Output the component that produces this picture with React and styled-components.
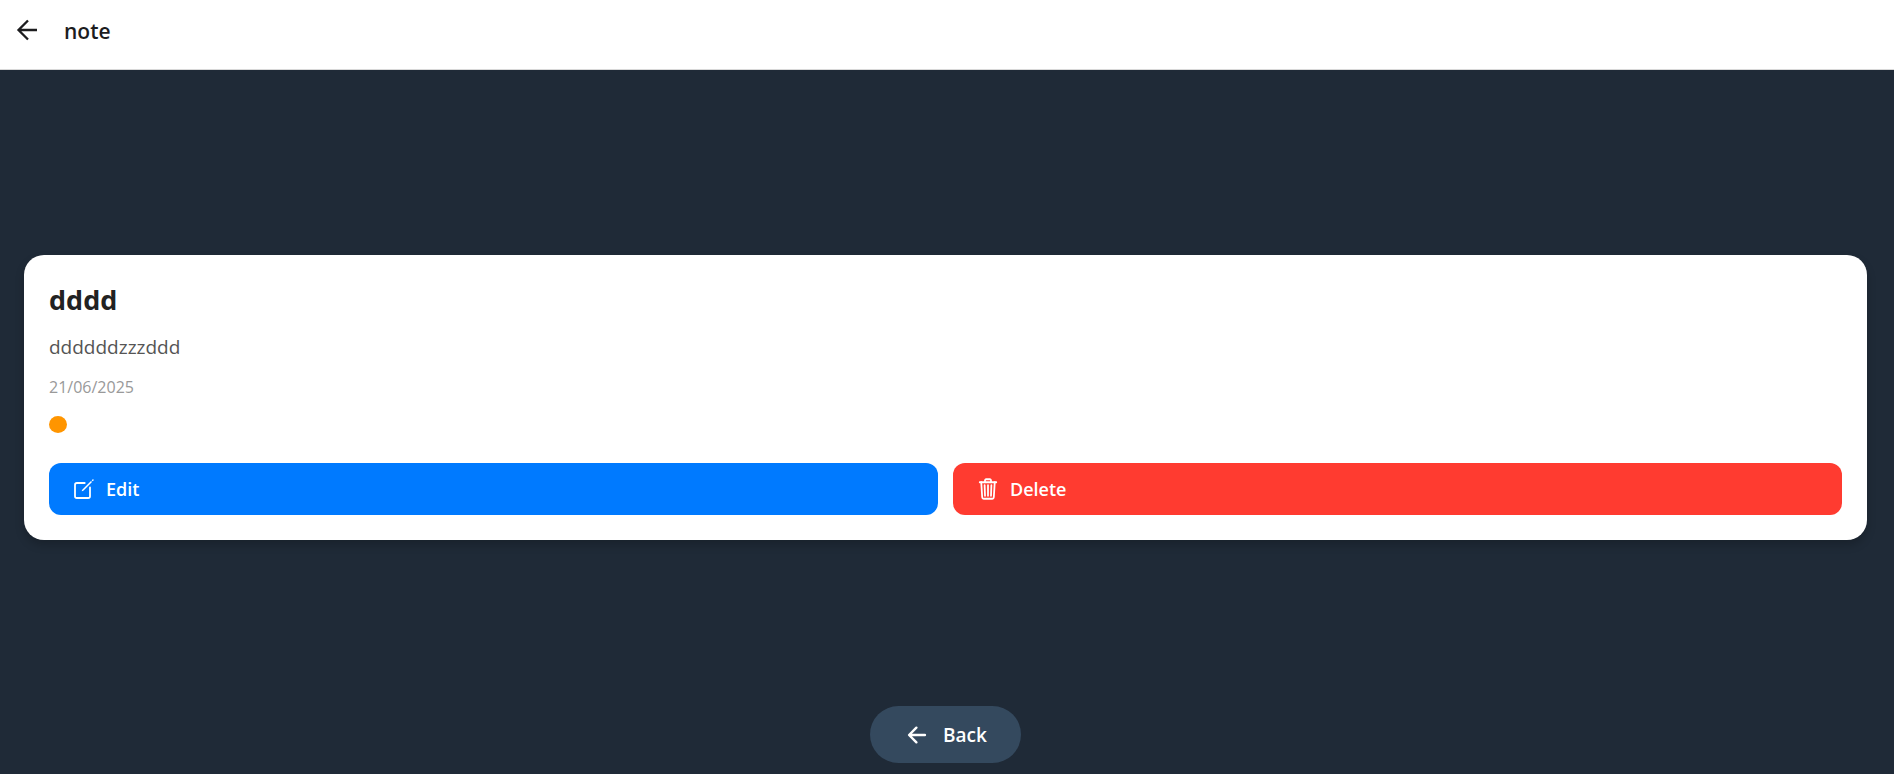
import React from "react";
import styled, { createGlobalStyle } from "styled-components";
import { IoArrowBack, IoCreateOutline, IoTrashOutline } from "react-icons/io5";

const GlobalStyle = createGlobalStyle`
  * { box-sizing: border-box; }
  body {
    margin: 0;
    background: #1f2a37;
    font-family: "Segoe UI", "Open Sans", "Noto Sans", sans-serif;
  }
  button { font-family: inherit; cursor: pointer; }
`;

const Screen = styled.div`
  display: flex;
  flex-direction: column;
  min-height: 100vh;
`;

const Header = styled.header`
  display: flex;
  align-items: center;
  height: 70px;
  padding: 0 14px 8px;
  background: #fff;
  border-bottom: 1px solid #d8d8d8;
`;

const HeaderBack = styled.button`
  display: flex;
  padding: 0;
  border: 0;
  background: none;
  color: #1c1c1e;
`;

const HeaderTitle = styled.h1`
  margin: 0 0 0 24px;
  font-size: 21px;
  line-height: 28px;
  font-weight: 600;
  color: #1c1c1e;
`;

const Main = styled.main`
  flex: 1;
  display: flex;
  align-items: center;
  padding: 18px 27px 0 24px;
`;

const Card = styled.article`
  flex: 1;
  padding: 25px;
  border-radius: 20px;
  background: #fff;
  box-shadow: 0 5px 10px rgba(0, 0, 0, 0.2);
`;

const Title = styled.h2`
  margin: 0 0 11px;
  font-size: 27px;
  line-height: 40px;
  font-weight: 700;
  color: #222;
`;

const Content = styled.p`
  margin: 0 0 13px;
  font-size: 19px;
  line-height: 32px;
  color: #555;
`;

const NoteDate = styled.time`
  display: block;
  margin-bottom: 18px;
  font-size: 16px;
  line-height: 22px;
  color: #999;
`;

const ColorDot = styled.div`
  width: 18px;
  height: 17px;
  margin-bottom: 30px;
  border-radius: 50%;
  background: #ff9500;
`;

const Actions = styled.div`
  display: flex;
  gap: 15px;
`;

const ActionButton = styled.button`
  flex: 1;
  display: flex;
  align-items: center;
  gap: 10px;
  height: 52px;
  padding: 1px 23px 0;
  border: 0;
  border-radius: 12px;
  background: ${(p) => p.$color};
  color: #fff;
  font-size: 18px;
  line-height: 24px;
  font-weight: 600;

  svg path[stroke-width] {
    stroke-width: 38px;
  }
`;

const Footer = styled.footer`
  display: flex;
  justify-content: center;
  padding: 0 3px 11px 0;
`;

const BackButton = styled.button`
  display: flex;
  align-items: center;
  gap: 13px;
  height: 57px;
  padding: 0 34px;
  border: 0;
  border-radius: 30px;
  background: #34495e;
  color: #fff;
  font-size: 19px;
  line-height: 26px;
  font-weight: 600;
`;

function HeaderArrow() {
  return (
    <svg width="26" height="26" viewBox="0 0 26 26" fill="none" stroke="currentColor" strokeWidth="2.3" aria-hidden="true">
      <path d="M23 12H4.5M14 2.5L4.5 12L14 21.5" />
    </svg>
  );
}

export default function App() {
  return (
    <Screen>
      <GlobalStyle />
      <Header>
        <HeaderBack type="button" aria-label="Go back">
          <HeaderArrow />
        </HeaderBack>
        <HeaderTitle>note</HeaderTitle>
      </Header>
      <Main>
        <Card>
          <Title>dddd</Title>
          <Content>ddddddzzzddd</Content>
          <NoteDate dateTime="2025-06-21">21/06/2025</NoteDate>
          <ColorDot />
          <Actions>
            <ActionButton type="button" $color="#007aff">
              <IoCreateOutline size={24} aria-hidden="true" />
              Edit
            </ActionButton>
            <ActionButton type="button" $color="#ff3b30">
              <IoTrashOutline size={24} aria-hidden="true" />
              Delete
            </ActionButton>
          </Actions>
        </Card>
      </Main>
      <Footer>
        <BackButton type="button">
          <IoArrowBack size={26} aria-hidden="true" />
          Back
        </BackButton>
      </Footer>
    </Screen>
  );
}
